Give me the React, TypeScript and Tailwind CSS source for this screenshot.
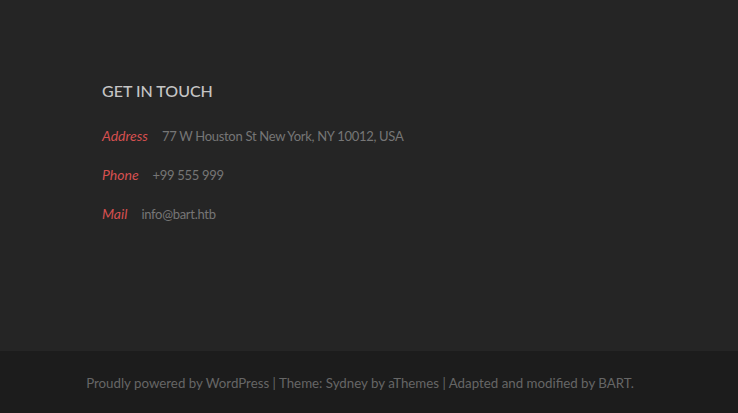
export default function App() {
  const rows = [
    { label: "Address", value: "77 W Houston St New York, NY 10012, USA" },
    { label: "Phone", value: "+99 555 999" },
    { label: "Mail", value: "info@bart.htb" },
  ];

  return (
    <div className="w-[738px] h-[413px] flex flex-col bg-[#252525] font-['Lato',sans-serif]">
      {/* Contact widget */}
      <div className="h-[351px] pl-[102px] pt-[81px]">
        <h3 className="text-[16px] leading-[20px] font-medium text-[#c5c5c5]">
          GET IN TOUCH
        </h3>
        <div className="mt-[25px] flex flex-col gap-[19px]">
          {rows.map((row) => (
            <div key={row.label} className="leading-[20px] flex items-baseline">
              <span className="text-[14px] italic text-[#d65050] mr-[14px]">{row.label}</span>
              <span className="text-[13px] tracking-[-0.3px] text-[#767676]">{row.value}</span>
            </div>
          ))}
        </div>
      </div>

      {/* Footer */}
      <div className="flex-1 bg-[#1c1c1c] flex items-center justify-center pr-[18px] pt-[4px]">
        <p className="text-[13.3px] text-[#666666]">
          Proudly powered by WordPress | Theme: Sydney by aThemes | Adapted and modified by BART.
        </p>
      </div>
    </div>
  );
}
